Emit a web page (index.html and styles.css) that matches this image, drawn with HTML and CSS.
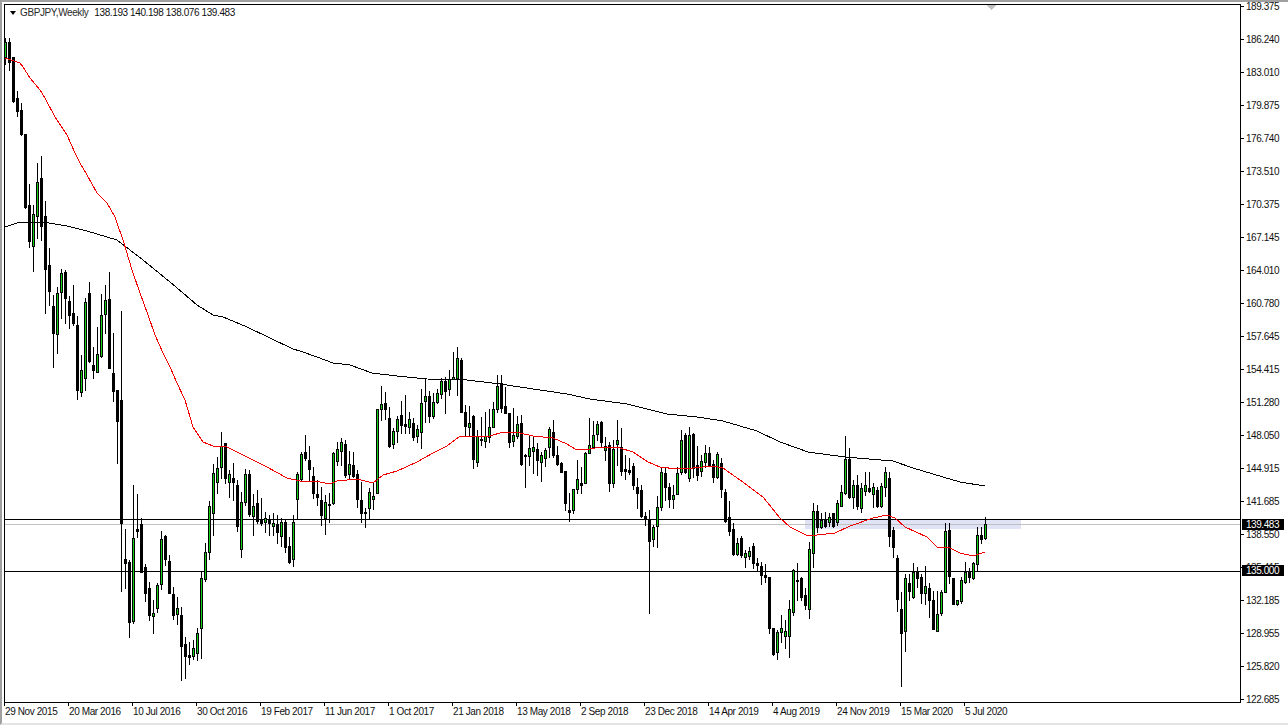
FILE: index.html
```html
<!DOCTYPE html>
<html lang="en">

<head>
    <meta charset="utf-8">
    <meta name="viewport" content="width=device-width, initial-scale=1.0">
    <title>GBPJPY,Weekly</title>
    <link rel="stylesheet" href="styles.css">
</head>

<body>
    <div class="terminal">
        <div class="chart_row">
            <div class="plot">
                <div class="legend">
                    <span class="legend_arrow"></span>
                    <span class="legend_name">GBPJPY,Weekly</span>
                    <span class="legend_ohlc">138.193 140.198 138.076 139.483</span>
                </div>
                <svg class="plot_svg" viewBox="5 5 1235 697" shape-rendering="crispEdges"></svg>
            </div>
            <div class="price_axis">
                <div class="price">189.375</div>
                <div class="price">186.240</div>
                <div class="price">183.010</div>
                <div class="price">179.875</div>
                <div class="price">176.740</div>
                <div class="price">173.510</div>
                <div class="price">170.375</div>
                <div class="price">167.145</div>
                <div class="price">164.010</div>
                <div class="price">160.780</div>
                <div class="price">157.645</div>
                <div class="price">154.415</div>
                <div class="price">151.280</div>
                <div class="price">148.050</div>
                <div class="price">144.915</div>
                <div class="price">141.685</div>
                <div class="price">138.550</div>
                <div class="price">135.415</div>
                <div class="price">132.185</div>
                <div class="price">128.955</div>
                <div class="price">125.820</div>
                <div class="price">122.685</div>
                <div class="price_tag tag_close">139.483</div>
                <div class="price_tag tag_level">135.000</div>
            </div>
        </div>
        <div class="date_axis">
            <div class="date">29 Nov 2015</div>
            <div class="date">20 Mar 2016</div>
            <div class="date">10 Jul 2016</div>
            <div class="date">30 Oct 2016</div>
            <div class="date">19 Feb 2017</div>
            <div class="date">11 Jun 2017</div>
            <div class="date">1 Oct 2017</div>
            <div class="date">21 Jan 2018</div>
            <div class="date">13 May 2018</div>
            <div class="date">2 Sep 2018</div>
            <div class="date">23 Dec 2018</div>
            <div class="date">14 Apr 2019</div>
            <div class="date">4 Aug 2019</div>
            <div class="date">24 Nov 2019</div>
            <div class="date">15 Mar 2020</div>
            <div class="date">5 Jul 2020</div>
        </div>
    </div>
    <script src="chart.js"></script>
</body>

</html>
```

FILE: styles.css
```css
body {
    margin: 0;
    background-color: white;
    font-family: "Liberation Sans", Arial, sans-serif;
    font-size: 10px;
    color: #111;
}

.terminal {
    width: 1288px;
    height: 725px;
    box-sizing: border-box;
    border-top: 2px solid #a0a0a0;
    border-left: 2px solid #a0a0a0;
    border-bottom: 2px solid #e4e4e4;
    padding: 2px 0 0 2px;
    overflow: hidden;
}

.chart_row {
    display: flex;
    height: 699px;
}

.plot {
    position: relative;
    width: 1237px;
    box-sizing: border-box;
    border: 1px solid black;
}

.plot_svg {
    display: block;
    width: 1235px;
    height: 697px;
}

.legend {
    position: absolute;
    top: 1px;
    left: 5px;
    display: flex;
    align-items: center;
    height: 13px;
    white-space: nowrap;
    letter-spacing: -0.4px;
}

.legend_arrow {
    width: 0;
    height: 0;
    margin-right: 4px;
    border-left: 3.5px solid transparent;
    border-right: 3.5px solid transparent;
    border-top: 4px solid black;
}

.legend_name {
    margin-right: 6px;
    color: #2a2a2a;
}

.price_axis {
    position: relative;
    flex: 1;
}

.price {
    position: relative;
    height: 33.02px;
    line-height: 5px;
    padding-left: 5px;
    letter-spacing: -0.45px;
}

.price::before {
    content: "";
    position: absolute;
    left: 0;
    top: 2px;
    width: 3px;
    height: 1px;
    background-color: black;
}

.price_tag {
    position: absolute;
    left: 1px;
    width: 42px;
    height: 11px;
    line-height: 11px;
    padding-left: 4px;
    box-sizing: border-box;
    background-color: black;
    color: white;
    letter-spacing: -0.45px;
}

.tag_close {
    top: 515px;
}

.tag_level {
    top: 561px;
}

.date_axis {
    display: flex;
}

.date {
    position: relative;
    flex: none;
    width: 64px;
    padding: 3px 0 0 1px;
    box-sizing: border-box;
    line-height: 12px;
    white-space: nowrap;
    letter-spacing: -0.4px;
}

.date::before {
    content: "";
    position: absolute;
    left: 0;
    top: 0;
    width: 1px;
    height: 3px;
    background-color: black;
}
```

FILE: chart.js
```js
// kind (g = up, b = down), high, body top, body bottom, low. Bars are 4px apart.
let bars = [
    "g 38 42 57 64", "b 38 42 62 70", "b 57 57 101 102", "b 91 98 111 116", "b 103 110 134 135", "b 134 134 207 208",
    "b 184 205 241 247", "g 205 214 246 271", "g 163 182 216 238", "b 156 178 226 240", "b 201 216 269 313", "b 248 265 291 305",
    "b 295 306 333 367", "g 287 293 334 353", "g 269 273 292 318", "b 270 272 298 323", "b 296 301 315 328", "b 285 313 323 325",
    "b 316 325 390 399", "g 355 370 392 396", "g 298 302 378 390", "b 282 293 361 362", "b 347 365 370 378", "g 327 354 372 372",
    "g 294 315 356 357", "g 285 300 314 333", "b 272 299 368 368", "b 333 373 391 401", "b 390 390 421 463", "b 311 400 523 591",
    "b 529 559 563 588", "b 560 562 622 637", "g 485 538 621 623", "b 494 529 531 537", "b 518 524 572 572", "b 564 567 593 601",
    "b 582 588 615 620", "g 600 613 616 633", "g 583 585 608 612", "g 531 539 584 589", "b 535 536 559 565", "b 555 561 593 593",
    "b 587 594 615 619", "g 597 608 614 624", "b 607 615 646 680", "b 637 644 656 678", "b 642 655 657 664", "g 640 648 656 659",
    "g 628 633 653 660", "g 572 578 628 658", "g 543 552 579 581", "g 501 506 552 559", "g 464 473 513 535", "g 457 468 482 493",
    "g 432 446 467 478", "b 443 443 478 483", "g 470 474 482 497", "b 463 478 482 500", "b 480 485 526 531", "g 492 502 549 557",
    "g 469 474 502 505", "b 470 474 514 516", "g 494 506 516 535", "b 490 503 521 523", "b 498 520 523 525", "g 512 518 522 532",
    "b 515 520 523 535", "g 513 523 526 535", "b 515 524 532 543", "g 518 522 536 546", "b 520 522 547 552", "b 537 546 562 563",
    "g 515 522 559 566", "g 472 474 499 519", "g 452 454 479 480", "b 435 452 458 460", "b 446 460 469 480", "b 467 476 493 498",
    "b 480 494 497 505", "b 487 500 515 525", "g 495 502 518 534", "g 493 504 505 522", "g 452 453 503 504", "g 442 449 461 465",
    "g 438 442 451 465", "b 440 444 475 477", "g 451 464 474 478", "b 452 465 476 477", "b 470 474 499 507", "b 482 500 513 522",
    "b 508 512 513 527", "g 488 492 508 518", "g 483 496 499 509", "g 409 409 493 493", "g 386 404 409 420", "b 392 403 409 419",
    "b 407 418 446 447", "g 428 431 444 448", "g 416 419 431 442", "b 401 415 425 433", "b 395 424 426 433", "g 412 419 427 433",
    "b 418 423 437 440", "g 425 429 436 442", "g 389 403 432 448", "g 379 396 401 422", "b 391 396 416 422", "g 393 402 416 418",
    "g 389 393 402 403", "g 378 381 394 398", "b 377 381 391 413", "g 370 379 389 395", "g 352 377 379 379", "g 347 358 378 395",
    "b 358 360 412 412", "b 405 412 426 436", "g 406 423 427 435", "b 415 416 459 468", "g 430 436 462 466", "g 417 439 440 445",
    "g 412 436 441 447", "g 409 427 437 442", "g 402 409 427 427", "g 375 386 409 412", "b 375 383 408 412", "b 387 406 413 413",
    "b 413 413 442 447", "g 408 435 441 446", "g 416 424 436 438", "b 415 423 464 465", "b 454 455 456 487", "g 435 448 456 465",
    "g 437 447 451 473", "b 443 449 460 475", "g 452 455 462 481", "g 448 450 458 466", "g 427 429 447 457", "b 420 432 455 457",
    "b 446 455 464 465", "b 462 463 472 472", "b 471 471 503 510", "b 493 510 512 521", "g 489 489 510 513", "g 460 479 489 493",
    "b 467 483 485 493", "g 452 453 483 483", "g 418 445 453 453", "g 421 435 447 447", "g 421 424 434 440", "b 421 422 442 446",
    "g 437 446 450 460", "b 442 445 483 491", "g 440 449 483 487", "g 420 440 444 465", "b 428 447 471 475", "b 455 469 471 479",
    "b 458 470 472 474", "b 463 466 485 489", "b 478 487 493 508", "b 485 490 516 517", "b 512 516 519 525", "b 510 519 541 613",
    "g 525 527 539 546", "g 496 507 526 547", "g 468 472 507 510", "b 468 473 487 500", "b 483 487 499 507", "g 485 495 499 508",
    "g 467 473 494 494", "g 430 440 472 474", "b 433 435 472 473", "g 427 435 478 481", "b 433 434 468 477", "b 446 465 475 480",
    "g 455 461 471 476", "g 445 453 462 467", "b 447 453 465 465", "b 460 464 477 482", "g 452 454 477 478", "b 458 463 489 497",
    "b 489 492 521 522", "b 501 517 531 535", "b 523 529 554 555", "g 538 543 554 555", "b 536 538 555 557", "g 550 553 557 567",
    "g 547 551 556 559", "b 543 546 563 568", "b 558 563 565 571", "b 562 566 575 584", "b 564 575 577 582", "b 577 577 628 633",
    "b 628 628 654 655", "g 630 632 652 659", "g 615 628 632 642", "g 620 631 636 648", "g 600 609 636 657", "g 569 570 612 615",
    "b 563 580 581 600", "b 577 578 597 600", "b 588 595 605 609", "g 542 549 609 618", "g 503 511 553 567", "b 505 511 527 532",
    "g 513 520 527 528", "b 512 520 526 527", "g 513 517 522 526", "b 513 513 526 527", "g 500 503 522 525", "g 485 492 506 506",
    "g 436 459 493 494", "b 448 459 497 498", "g 480 485 497 508", "b 475 485 506 509", "g 483 488 508 512", "g 472 485 491 495",
    "b 472 488 491 492", "g 483 487 494 507", "b 487 490 506 507", "g 483 486 506 507", "g 467 472 487 496", "b 472 478 536 546",
    "b 527 530 547 557", "b 555 558 599 611", "b 592 609 633 686", "g 574 578 631 651", "b 574 583 591 600", "g 563 572 597 598",
    "b 567 572 578 587", "b 574 577 593 603", "g 566 586 593 604", "b 583 588 600 617", "b 591 600 629 629", "g 591 614 631 631",
    "g 590 592 613 615", "g 523 531 592 592", "b 523 530 576 583", "b 578 578 604 604", "g 600 600 604 605", "g 577 580 601 603",
    "g 562 572 582 583", "b 568 572 577 582", "g 562 563 578 579", "g 527 535 564 570", "b 527 535 539 543", "g 517 524 538 539"
];

let redLine = "5,58 20,63 23,67 30,78 40,90 45,98 55,117 67,135 75,153 80,163 87,175 97,193 107,203 115,217 124,243 132,270 140,293 148,315 155,335 163,353 170,367 177,383 185,400 193,427 203,442 213,446 227,447 233,450 247,457 267,467 287,478 300,481 315,481 330,484 337,481 357,479 373,483 383,475 397,471 417,462 433,453 447,446 459,437 477,436 487,437 503,432 520,433 533,436 553,438 567,444 575,449 590,449 600,447 620,448 633,452 648,462 660,467 677,469 693,468 713,466 723,468 740,480 763,497 780,518 790,527 808,536 835,533 850,526 873,518 887,515 895,518 905,527 927,537 937,547 950,548 960,553 973,556 985,552";
let blackLine = "5,227 20,222 43,222 67,226 87,231 117,240 143,260 170,282 183,293 197,305 213,315 223,317 247,327 270,338 293,349 300,351 317,357 333,363 350,365 372,373 397,376 427,379 467,380 500,384 540,390 567,394 590,399 627,404 667,414 697,417 723,421 757,431 780,442 808,452 845,457 893,461 913,468 943,477 960,482 985,486";

let svg = document.querySelector(".plot_svg");
let markup = "";

function rect(x, y, w, h, fill) {
    markup += `<rect x="${x}" y="${y}" width="${w}" height="${h}" fill="${fill}"/>`;
}

// objects below the bars
rect(805, 520, 216, 9, "#e0e2f6");
rect(5, 519, 1235, 1, "#000");
rect(5, 524, 1235, 1, "#c0c0c0");
rect(5, 571, 1235, 1, "#000");
markup += `<polygon points="987,5 996,5 991.5,10" fill="#c0c0c0"/>`;

bars.forEach((bar, i) => {
    let [kind, high, top, bottom, low] = bar.split(" ");
    high = +high; top = +top; bottom = +bottom; low = +low;
    let x = 5 + 4 * i;
    rect(x, high, 1, low - high + 1, "#000");
    rect(x - 1, top, 3, bottom - top + 1, "#000");
    if (kind == "g") {
        rect(x, top + 1, 1, bottom - top - 1, "#16d016");
    }
});

markup += `<polyline points="${blackLine}" fill="none" stroke="#000" stroke-width="1"/>`;
markup += `<polyline points="${redLine}" fill="none" stroke="#f00000" stroke-width="1"/>`;
svg.innerHTML = markup;
```
